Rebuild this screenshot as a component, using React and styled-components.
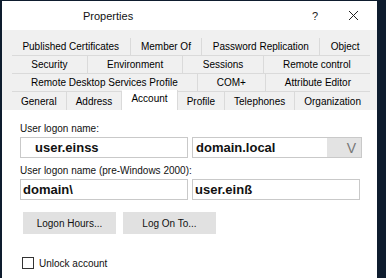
import * as React from "react";
import styled, { createGlobalStyle } from "styled-components";

const GlobalStyle = createGlobalStyle`
  html, body {
    margin: 0;
    padding: 0;
    background-color: #0e1c2e;
  }
`;

const tabRows = [
  ["Published Certificates", "Member Of", "Password Replication", "Object"],
  ["Security", "Environment", "Sessions", "Remote control"],
  ["Remote Desktop Services Profile", "COM+", "Attribute Editor"],
  ["General", "Address", "Account", "Profile", "Telephones", "Organization"]
];

export default function App() {
  return (
    <Desktop>
      <GlobalStyle />
      <Dialog>
        <TitleBar>
          <Title>Properties</Title>
          <TitleButton>?</TitleButton>
          <TitleButton>
            <svg width="11" height="11" viewBox="0 0 11 11">
              <path d="M1 1 L10 10 M10 1 L1 10" stroke="#222" strokeWidth="1" />
            </svg>
          </TitleButton>
        </TitleBar>
        <TabArea>
          {tabRows.map((row, i) => (
            <TabRow key={i} last={i === tabRows.length - 1}>
              {row.map(tab => (
                <Tab key={tab} selected={tab === "Account"}>
                  {tab}
                </Tab>
              ))}
            </TabRow>
          ))}
        </TabArea>
        <Panel>
          <Label>User logon name:</Label>
          <FieldRow>
            <Input indent>user.einss</Input>
            <Select>
              <SelectValue>domain.local</SelectValue>
              <SelectArrow>V</SelectArrow>
            </Select>
          </FieldRow>
          <Label>User logon name (pre-Windows 2000):</Label>
          <FieldRow>
            <Input>domain\</Input>
            <Input>user.einß</Input>
          </FieldRow>
          <ButtonRow>
            <Button>Logon Hours...</Button>
            <Button>Log On To...</Button>
          </ButtonRow>
          <CheckRow>
            <CheckBox />
            <CheckLabel>Unlock account</CheckLabel>
          </CheckRow>
        </Panel>
      </Dialog>
    </Desktop>
  );
}

const Desktop = styled.div`
  display: flex;
  width: 386px;
  height: 278px;
  padding: 1px 9px 0 2px;
  box-sizing: border-box;
  background-color: #0e1c2e;
  font-family: "Liberation Sans", Arial, sans-serif;
  color: #000;
  overflow: hidden;
`;

const Dialog = styled.div`
  display: flex;
  flex: 1;
  flex-direction: column;
  background-color: #fff;
`;

const TitleBar = styled.div`
  display: flex;
  align-items: center;
  height: 29px;
  padding-left: 81px;
  background-color: #fff;
`;

const Title = styled.span`
  flex: 1;
  font-size: 11px;
  color: #111;
`;

const TitleButton = styled.span`
  display: flex;
  align-items: center;
  justify-content: center;
  width: 38px;
  font-size: 11px;
  color: #222;
  &:last-child {
    margin-right: 5px;
  }
`;

const TabArea = styled.div`
  display: flex;
  flex-direction: column;
  padding: 8px 7px 0 10px;
  background-color: #f0f0f0;
`;

const TabRow = styled.div`
  display: flex;
  height: ${p => (p.last ? 18 : 17)}px;
  border-bottom: ${p => (p.last ? "none" : "1px solid #dadada")};
`;

const Tab = styled.div`
  display: flex;
  flex: 1 1 auto;
  align-items: center;
  justify-content: center;
  padding: 0 4px;
  font-size: 10px;
  white-space: nowrap;
  border-right: 1px solid #dadada;
  background-color: ${p => (p.selected ? "#fff" : "transparent")};
  margin-top: ${p => (p.selected ? "-2px" : "0")};
  padding-bottom: ${p => (p.selected ? "4px" : "0")};
  &:last-child {
    border-right: none;
  }
`;

const Panel = styled.div`
  display: flex;
  flex: 1;
  flex-direction: column;
  padding: 12px 12px 0 18px;
  background-color: #fff;
`;

const Label = styled.div`
  font-size: 10px;
  color: #111;
  height: 14px;
  line-height: 14px;
`;

const FieldRow = styled.div`
  display: flex;
  gap: 4px;
  margin: 1px 0 6px;
`;

const Input = styled.div`
  display: flex;
  align-items: center;
  width: 168px;
  height: 21px;
  padding-left: ${p => (p.indent ? "14px" : "2px")};
  box-sizing: border-box;
  border: 1px solid #c9c9c9;
  font-size: 13px;
  font-weight: bold;
  color: #111;
`;

const Select = styled.div`
  display: flex;
  width: 170px;
  height: 21px;
  box-sizing: border-box;
  border: 1px solid #c9c9c9;
`;

const SelectValue = styled.div`
  display: flex;
  flex: 1;
  align-items: center;
  padding-left: 3px;
  font-size: 13px;
  font-weight: bold;
  color: #111;
`;

const SelectArrow = styled.div`
  display: flex;
  align-items: center;
  justify-content: flex-end;
  width: 34px;
  padding-right: 5px;
  box-sizing: border-box;
  background-color: #e3e3e3;
  font-size: 14px;
  color: #777;
`;

const ButtonRow = styled.div`
  display: flex;
  gap: 7px;
  margin: 6px 0 0 3px;
`;

const Button = styled.div`
  display: flex;
  align-items: center;
  justify-content: center;
  width: 93px;
  height: 22px;
  background-color: #e1e1e1;
  font-size: 10px;
  color: #111;
`;

const CheckRow = styled.div`
  display: flex;
  align-items: center;
  gap: 5px;
  margin-top: 23px;
  margin-left: 2px;
`;

const CheckBox = styled.div`
  width: 12px;
  height: 12px;
  box-sizing: border-box;
  border: 1px solid #333;
  background-color: #fff;
`;

const CheckLabel = styled.span`
  font-size: 10px;
  color: #111;
`;
